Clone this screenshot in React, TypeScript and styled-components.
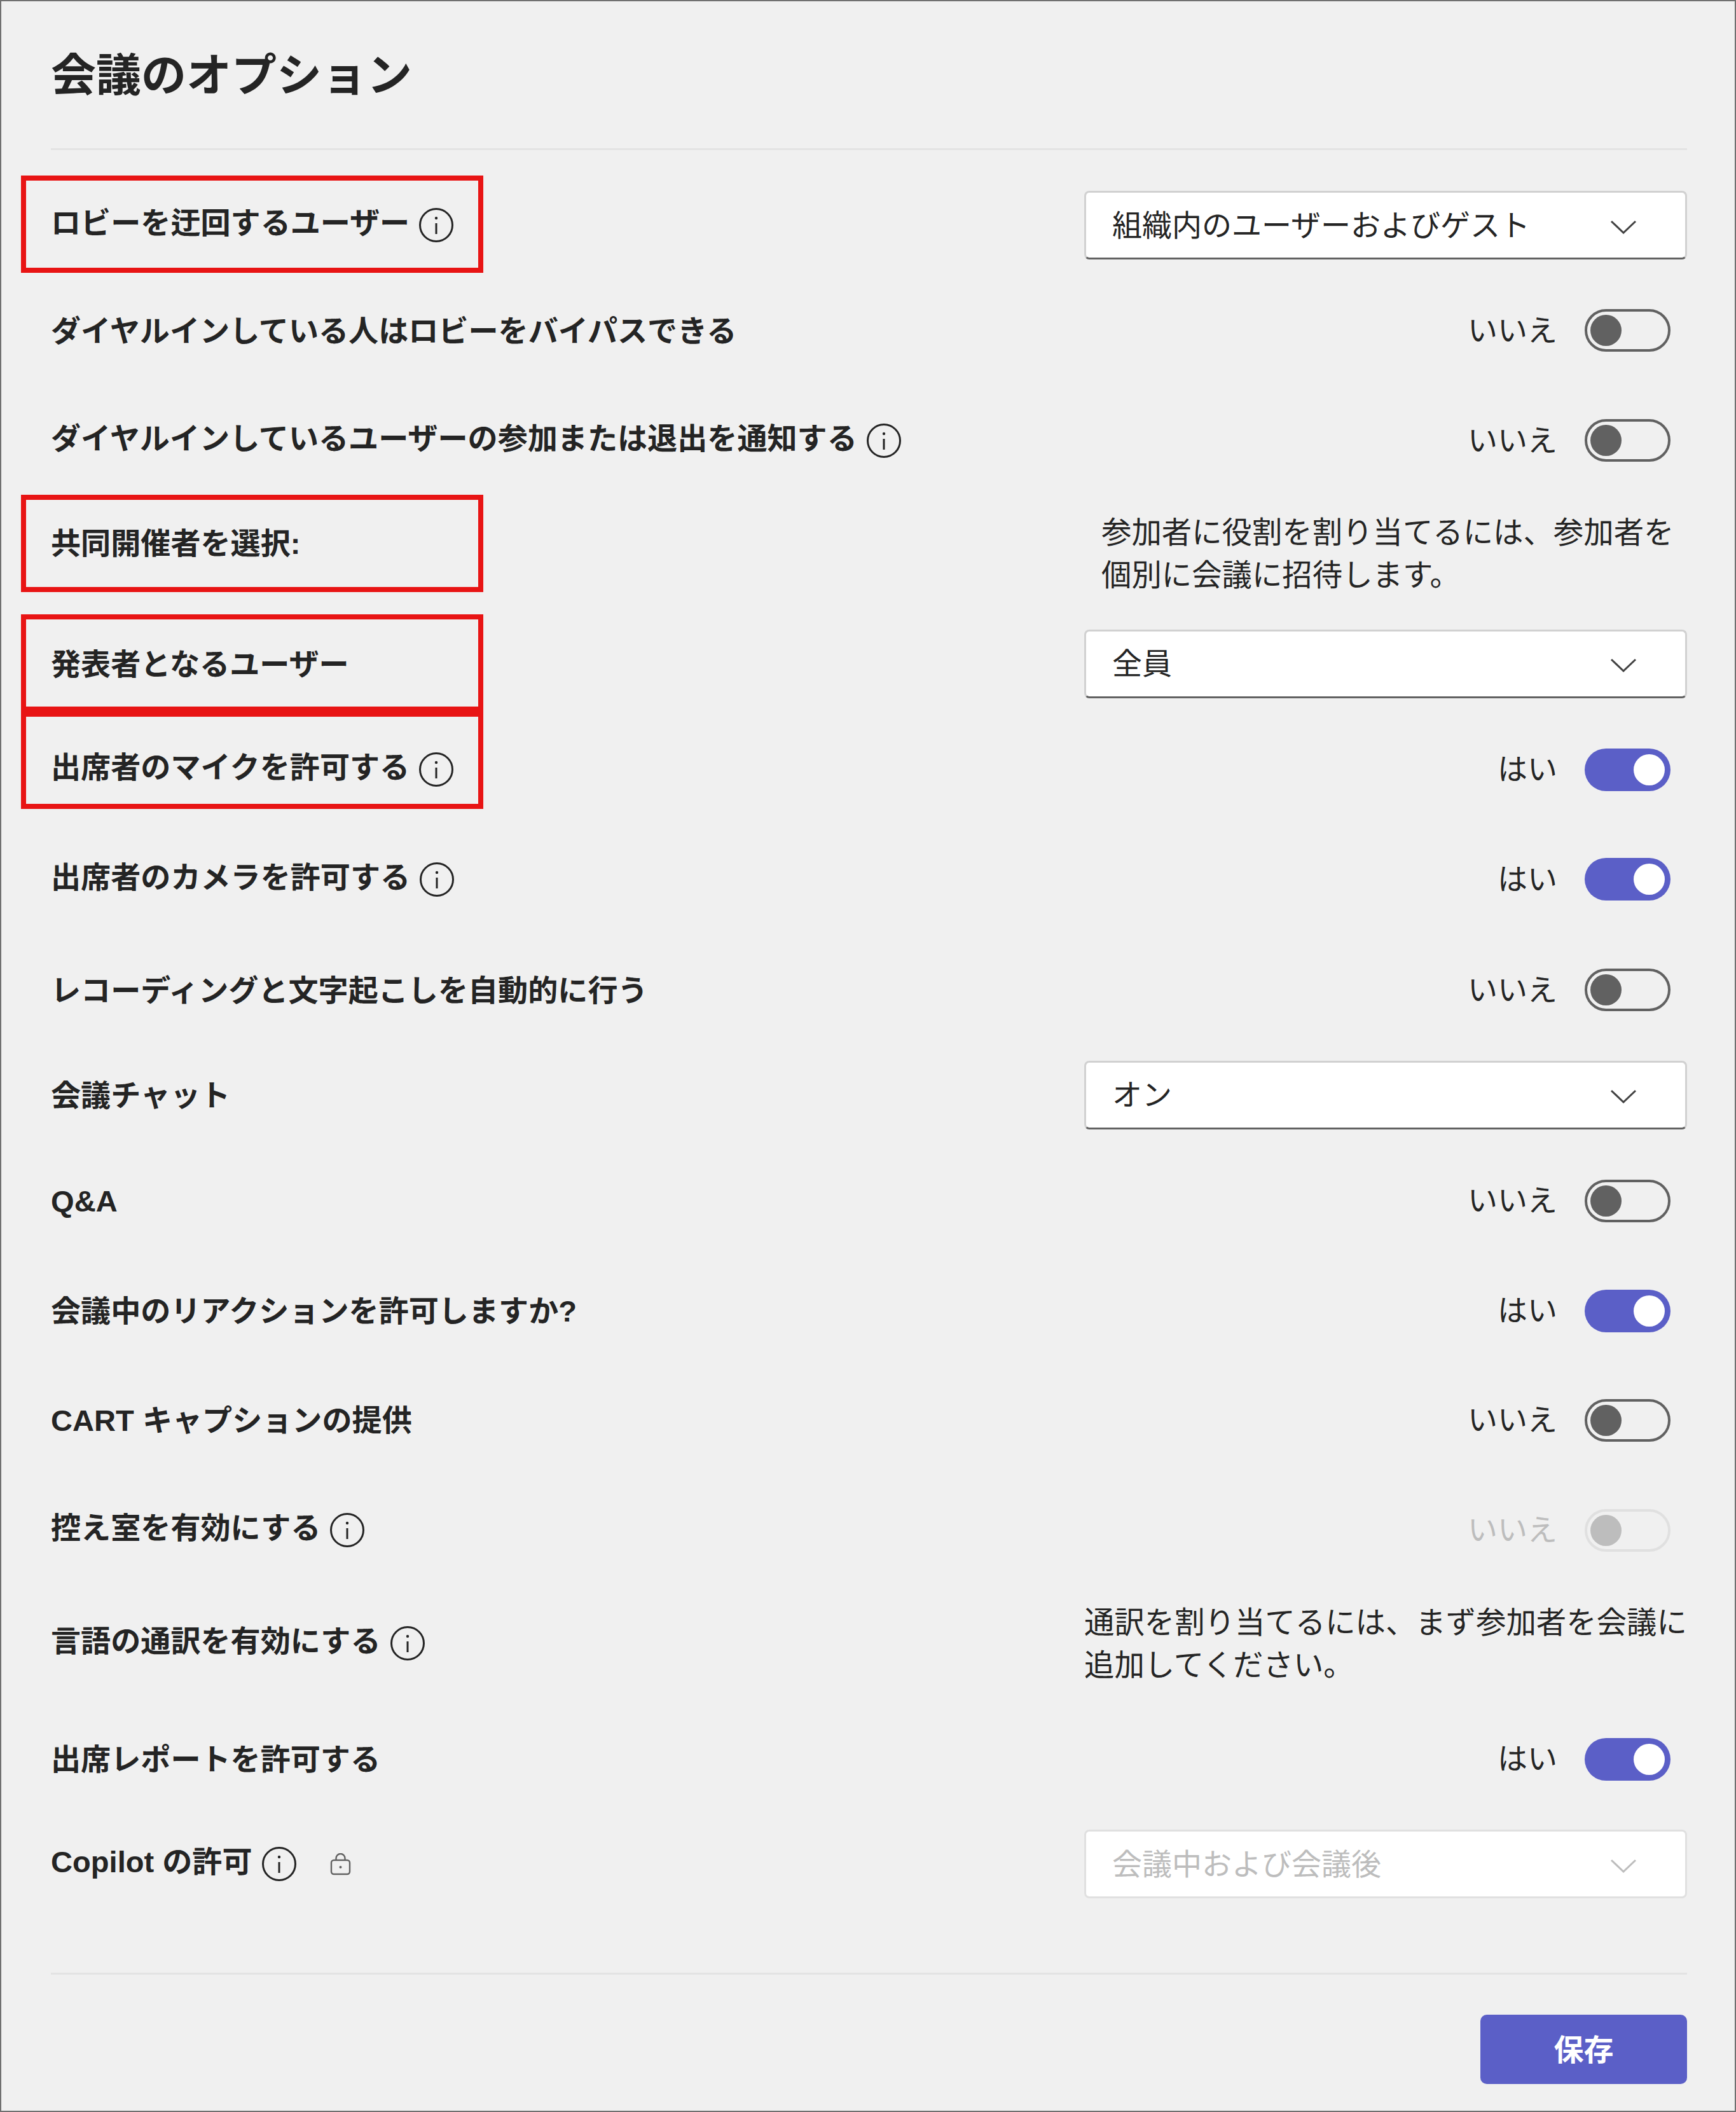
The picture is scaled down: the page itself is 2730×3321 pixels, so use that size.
import React from 'react';
import styled, { createGlobalStyle } from 'styled-components';

const GlobalStyle = createGlobalStyle`
  html, body {
    margin: 0;
    padding: 0;
    background: #f0f0f0;
  }
  body {
    font-family: "Liberation Sans", "Noto Sans CJK JP", sans-serif;
    color: #242424;
  }
`;

const Panel = styled.main`
  box-sizing: border-box;
  width: 2730px;
  height: 3321px;
  padding: 0 75px 0 78px;
  background: #f0f0f0;
  border: 2px solid #707070;
  overflow: hidden;
`;

const Header = styled.header`
  display: flex;
  align-items: center;
  height: 231px;
  border-bottom: 3px solid #e3e3e3;
`;

const Title = styled.h1`
  margin: 2px 0 0;
  font-size: 71px;
  line-height: 1.2;
  font-weight: 700;
`;

const List = styled.div`
  display: flex;
  flex-direction: column;
`;

const Row = styled.div<{ $top: number }>`
  position: relative;
  display: flex;
  align-items: center;
  justify-content: space-between;
  height: 132px;
  margin-top: ${(p) => p.$top}px;
`;

const Highlight = styled.div<{ $top: number }>`
  position: absolute;
  box-sizing: border-box;
  left: -47px;
  top: ${(p) => p.$top}px;
  width: 727px;
  height: 153px;
  border: 8px solid #e81414;
`;

const LabelGroup = styled.div`
  display: flex;
  align-items: center;
`;

const Label = styled.span<{ $raised?: boolean }>`
  font-size: 47.1px;
  font-weight: 700;
  line-height: 60px;
  margin-top: ${(p) => (p.$raised ? -6 : 2)}px;
  white-space: nowrap;
`;

const InfoIcon = styled.svg`
  width: 56px;
  height: 56px;
  margin-left: 14px;
  flex: none;
`;

const LockIcon = styled.svg`
  width: 33px;
  height: 35px;
  margin-left: 52px;
  flex: none;
`;

const Side = styled.div`
  width: 948px;
  flex: none;
`;

const ToggleWrap = styled.div`
  display: flex;
  align-items: center;
  justify-content: flex-end;
  gap: 43px;
  margin-right: 26px;
`;

const ToggleText = styled.span<{ $disabled?: boolean }>`
  font-size: 47px;
  line-height: 60px;
  color: ${(p) => (p.$disabled ? '#bdbdbd' : '#242424')};
`;

const Track = styled.div<{ $on?: boolean; $disabled?: boolean }>`
  box-sizing: border-box;
  display: flex;
  align-items: center;
  justify-content: ${(p) => (p.$on ? 'flex-end' : 'flex-start')};
  width: 135px;
  height: 67px;
  padding: 0 ${(p) => (p.$on ? 9 : 5)}px;
  border-radius: 34px;
  background: ${(p) => (p.$on ? '#5b5fc7' : 'transparent')};
  border: ${(p) =>
    p.$on ? 'none' : p.$disabled ? '4px solid #e0e0e0' : '4px solid #616161'};
`;

const Thumb = styled.div<{ $on?: boolean; $disabled?: boolean }>`
  width: 49px;
  height: 49px;
  border-radius: 50%;
  background: ${(p) => (p.$on ? '#fff' : p.$disabled ? '#bdbdbd' : '#616161')};
`;

const Select = styled.div<{ $disabled?: boolean }>`
  box-sizing: border-box;
  display: flex;
  align-items: center;
  justify-content: space-between;
  height: 108px;
  padding: 0 76px 0 41px;
  background: #fff;
  border-radius: 8px;
  border: 3px solid ${(p) => (p.$disabled ? '#e0e0e0' : '#d1d1d1')};
  border-bottom-color: ${(p) => (p.$disabled ? '#e0e0e0' : '#616161')};
  font-size: 47px;
  color: ${(p) => (p.$disabled ? '#bdbdbd' : '#242424')};
`;

const SelectValue = styled.span`
  padding-bottom: 8px;
`;

const Chevron = styled.svg<{ $disabled?: boolean }>`
  width: 42px;
  height: 22px;
  margin-top: 5px;
  stroke: ${(p) => (p.$disabled ? '#bdbdbd' : '#424242')};
`;

const Note = styled.p<{ $indent: number; $drop: number }>`
  margin: 0;
  padding: ${(p) => p.$drop}px 0 0 ${(p) => p.$indent}px;
  font-size: 47.4px;
  line-height: 67px;
  white-space: nowrap;
`;

const Footer = styled.footer`
  display: flex;
  justify-content: flex-end;
  margin-top: 105px;
  padding-top: 63px;
  border-top: 3px solid #e3e3e3;
`;

const SaveButton = styled.button`
  width: 325px;
  height: 109px;
  padding: 0 0 6px;
  border: none;
  border-radius: 10px;
  background: #5b5fc7;
  color: #fff;
  font-family: inherit;
  font-size: 47px;
  font-weight: 700;
`;

function Info() {
  return (
    <InfoIcon viewBox="0 0 56 56" fill="none" stroke="#242424">
      <circle cx="28" cy="28" r="25.5" strokeWidth="3" />
      <path d="M28 25v17" strokeWidth="3" />
      <circle cx="28" cy="17" r="2.2" fill="#242424" stroke="none" />
    </InfoIcon>
  );
}

function Lock() {
  return (
    <LockIcon viewBox="0 0 33 35" fill="none" stroke="#616161" strokeWidth="2.4">
      <rect x="2" y="11" width="29" height="22" rx="4" />
      <path d="M9.5 11V8a7 7 0 0 1 14 0v3" />
      <circle cx="16.5" cy="22" r="2" fill="#616161" stroke="none" />
    </LockIcon>
  );
}

type Control =
  | { kind: 'toggle'; on: boolean; disabled?: boolean }
  | { kind: 'select'; value: string; disabled?: boolean }
  | { kind: 'note'; lines: string[]; indent: number; drop: number };

type Option = {
  label: string;
  info?: boolean;
  lock?: boolean;
  top: number;
  box?: number;
  control: Control;
};

const options: Option[] = [
  { label: 'ロビーを迂回するユーザー', info: true, top: 52, box: -12, control: { kind: 'select', value: '組織内のユーザーおよびゲスト' } },
  { label: 'ダイヤルインしている人はロビーをバイパスできる', top: 33.5, control: { kind: 'toggle', on: false } },
  { label: 'ダイヤルインしているユーザーの参加または退出を通知する', info: true, top: 41, control: { kind: 'toggle', on: false } },
  { label: '共同開催者を選択:', top: 29, box: -10, control: { kind: 'note', indent: 27, drop: 34, lines: ['参加者に役割を割り当てるには、参加者を', '個別に会議に招待します。'] } },
  { label: '発表者となるユーザー', top: 58, box: -12, control: { kind: 'select', value: '全員' } },
  { label: '出席者のマイクを許可する', info: true, top: 34.5, box: -25.5, control: { kind: 'toggle', on: true } },
  { label: '出席者のカメラを許可する', info: true, top: 40.5, control: { kind: 'toggle', on: true } },
  { label: 'レコーディングと文字起こしを自動的に行う', top: 42, control: { kind: 'toggle', on: false } },
  { label: '会議チャット', top: 33, control: { kind: 'select', value: 'オン' } },
  { label: 'Q&A', top: 34.5, control: { kind: 'toggle', on: false } },
  { label: '会議中のリアクションを許可しますか?', top: 41, control: { kind: 'toggle', on: true } },
  { label: 'CART キャプションの提供', top: 40, control: { kind: 'toggle', on: false } },
  { label: '控え室を有効にする', info: true, top: 41, control: { kind: 'toggle', on: false, disabled: true } },
  { label: '言語の通訳を有効にする', info: true, top: 46, control: { kind: 'note', indent: 0, drop: 2, lines: ['通訳を割り当てるには、まず参加者を会議に', '追加してください。'] } },
  { label: '出席レポートを許可する', top: 50, control: { kind: 'toggle', on: true } },
  { label: 'Copilot の許可', info: true, lock: true, top: 33, control: { kind: 'select', value: '会議中および会議後', disabled: true } },
];

function renderControl(control: Control) {
  if (control.kind === 'toggle') {
    return (
      <ToggleWrap>
        <ToggleText $disabled={control.disabled}>{control.on ? 'はい' : 'いいえ'}</ToggleText>
        <Track $on={control.on} $disabled={control.disabled}>
          <Thumb $on={control.on} $disabled={control.disabled} />
        </Track>
      </ToggleWrap>
    );
  }
  if (control.kind === 'select') {
    return (
      <Select $disabled={control.disabled}>
        <SelectValue>{control.value}</SelectValue>
        <Chevron $disabled={control.disabled} viewBox="0 0 42 22" fill="none" strokeWidth="3">
          <path d="M2 2l19 18L40 2" />
        </Chevron>
      </Select>
    );
  }
  return (
    <Note $indent={control.indent} $drop={control.drop}>
      {control.lines.map((line) => (
        <React.Fragment key={line}>
          {line}
          <br />
        </React.Fragment>
      ))}
    </Note>
  );
}

export default function App() {
  return (
    <>
      <GlobalStyle />
      <Panel>
        <Header>
          <Title>会議のオプション</Title>
        </Header>
        <List>
          {options.map((opt) => (
            <Row key={opt.label} $top={opt.top}>
              {opt.box !== undefined && <Highlight $top={opt.box} />}
              <LabelGroup>
                <Label $raised={opt.info}>{opt.label}</Label>
                {opt.info && <Info />}
                {opt.lock && <Lock />}
              </LabelGroup>
              <Side>{renderControl(opt.control)}</Side>
            </Row>
          ))}
        </List>
        <Footer>
          <SaveButton>保存</SaveButton>
        </Footer>
      </Panel>
    </>
  );
}
